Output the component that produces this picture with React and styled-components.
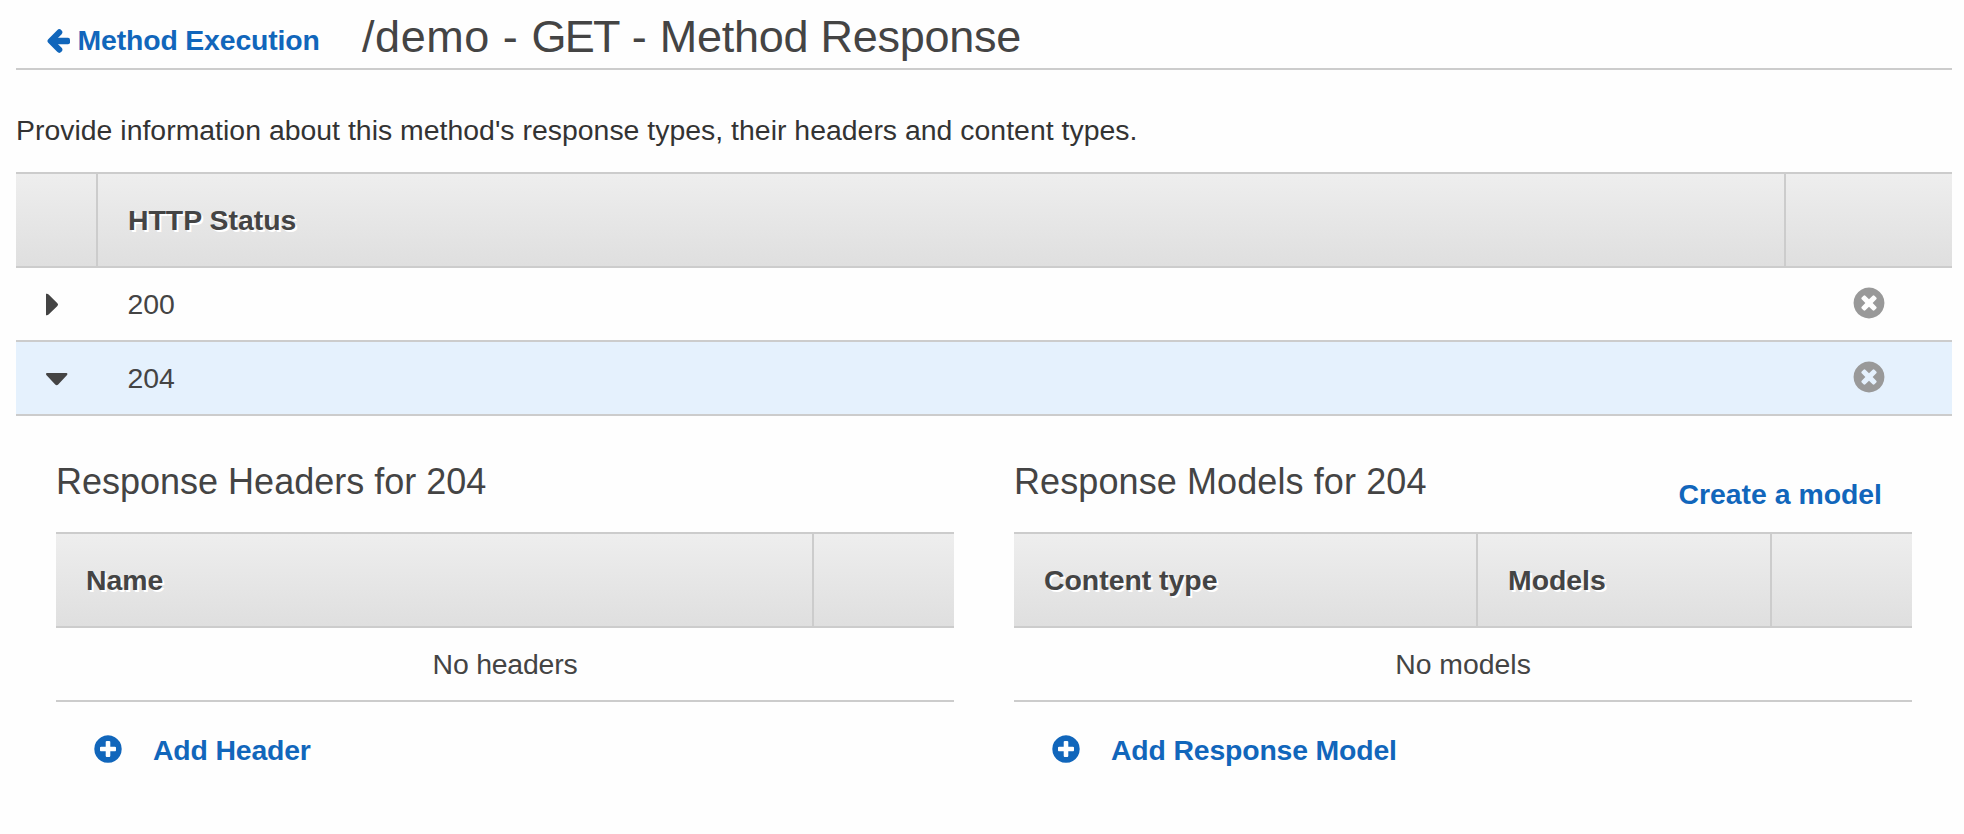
import React from "react";
import styled, { createGlobalStyle, css } from "styled-components";

const GlobalStyle = createGlobalStyle`
  *, *::before, *::after { box-sizing: border-box; }
  body {
    margin: 0;
    background: #fefefe;
    color: #444;
    font-family: "Liberation Sans", Arial, Helvetica, sans-serif;
    font-size: 28.4px;
    line-height: 32px;
    white-space: nowrap;
  }
`;

const LINE = "#ccc";
const BLUE = "#1166bb";

const Page = styled.main`
  height: 834px;
  padding: 0 12px 0 16px;
  overflow: hidden;
`;

const TopBar = styled.header`
  display: flex;
  align-items: flex-start;
  height: 70px;
  padding-left: 30px;
  border-bottom: 2px solid ${LINE};
`;

const Link = styled.a`
  color: ${BLUE};
  font-weight: bold;
  cursor: pointer;
`;

const BackLink = styled(Link)`
  display: flex;
  align-items: center;
  width: 316px;
  gap: 7.5px;
  margin-top: 24px;
  letter-spacing: -0.14px;

  svg {
    margin-top: 2px;
  }
`;

const Title = styled.h1`
  margin: 11px 0 0;
  font-size: 45px;
  line-height: 51px;
  font-weight: normal;
  white-space: pre;
`;

const TitlePart = styled.span`
  letter-spacing: ${(p) => p.$track}px;
`;

const Intro = styled.p`
  margin: 44px 0 26px;
  color: #333;
  letter-spacing: 0.02px;
`;

const HeadRow = styled.div`
  display: grid;
  grid-template-columns: ${(p) => p.$columns};
  height: 96px;
  border: solid ${LINE};
  border-width: 2px 0;
  background: linear-gradient(#eee, #dfdfdf);
`;

const HeadCell = styled.div`
  display: flex;
  align-items: center;
  padding-left: 30px;
  font-weight: bold;
  text-shadow: 2px 2px 0 #fff;

  & + & {
    border-left: 2px solid ${LINE};
  }
`;

const Row = styled.div`
  display: grid;
  grid-template-columns: 82px 1fr 166px;
  align-items: center;
  height: 74px;
  border-bottom: 2px solid ${LINE};
  ${(p) =>
    p.$selected &&
    css`
      background: #e5f1fd;
    `}
`;

const Toggle = styled.div`
  display: flex;
  padding: 2px 0 0 30px;
`;

const Code = styled.div`
  padding-left: 29.5px;
`;

const Remove = styled.div`
  display: flex;
  padding: 0 0 2px 65px;
`;

const Details = styled.div`
  display: grid;
  grid-template-columns: 898px 898px;
  gap: 60px;
  padding: 0 40px;
`;

const PanelTop = styled.div`
  display: flex;
  justify-content: space-between;
  height: 116px;
  padding: 45px 30px 0 0;
`;

const PanelTitle = styled.h2`
  margin: 0;
  font-size: 36px;
  line-height: 41px;
  font-weight: normal;
  letter-spacing: ${(p) => p.$track || 0}px;
`;

const PanelAction = styled(Link)`
  margin-top: 17px;
`;

const EmptyRow = styled.div`
  height: 74px;
  padding-top: 20px;
  border-bottom: 2px solid ${LINE};
  text-align: center;
  letter-spacing: ${(p) => p.$track || 0}px;
`;

const AddLink = styled(Link)`
  display: flex;
  align-items: flex-start;
  gap: 29px;
  padding: 32px 0 0 36px;
  letter-spacing: -0.16px;

  svg {
    margin-top: -1px;
  }
`;

const Glyph = styled.svg`
  display: block;
  flex: none;
  width: ${(p) => p.$size}px;
  height: ${(p) => p.$size}px;
  fill: ${(p) => p.$color || "currentColor"};
`;

const DISC =
  "q0 209-103 385.5t-279.5 279.5-385.5 103-385.5-103-279.5-279.5-103-385.5 103-385.5 279.5-279.5 385.5-103 385.5 103 279.5 279.5 103 385.5z";

const ArrowLeft = () => (
  <Glyph $size={24} viewBox="0 0 24 24">
    <path
      d="M13.300 3.300L4.600 12l8.700 8.700"
      fill="none"
      stroke="currentColor"
      strokeWidth="6"
      strokeLinecap="round"
      strokeLinejoin="round"
    />
    <rect x="5" y="8.800" width="19" height="6.400" rx="2" />
  </Glyph>
);

const Caret = ({ open }) => (
  <Glyph $size={24} viewBox="0 0 24 24">
    {open ? (
      <path d="M1 6H20.400Q21.400 6 21.400 7Q21.200 8 20.600 8.600L12.200 17.500Q10.700 19 9.200 17.500L.8 8.600Q.2 8 0 7Q0 6 1 6Z" />
    ) : (
      <path d="M0 .8H.8Q1.900 .8 2.600 1.500L11.400 10.300Q12.800 11.600 11.400 12.900L2.600 21.600Q1.900 22.300 .8 22.300H0Z" />
    )}
  </Glyph>
);

const TimesCircle = () => (
  <Glyph $size={36} $color="#999" viewBox="0 0 1792 1792">
    <path
      d={
        "M1277 1122q0-26-19-45l-181-181 181-181q19-19 19-45 0-27-19-46l-90-90q-19-19-46-19-26 0-45 19l-181 181-181-181q-19-19-45-19-27 0-46 19l-90 90q-19 19-19 46 0 26 19 45l181 181-181 181q-19 19-19 45 0 27 19 46l90 90q19 19 46 19 26 0 45-19l181-181 181 181q19 19 45 19 27 0 46-19l90-90q19-19 19-46zm387-226" +
        DISC
      }
    />
  </Glyph>
);

const PlusCircle = () => (
  <Glyph $size={32} viewBox="0 0 1792 1792">
    <path
      d={
        "M1344 960v-128q0-26-19-45t-45-19h-256v-256q0-26-19-45t-45-19h-128q-26 0-45 19t-19 45v256h-256q-26 0-45 19t-19 45v128q0 26 19 45t45 19h256v256q0 26 19 45t45 19h128q26 0 45-19t19-45v-256h256q26 0 45-19t19-45zm320-64" +
        DISC
      }
    />
  </Glyph>
);

const StatusRow = ({ code, open }) => (
  <Row $selected={open}>
    <Toggle>
      <Caret open={open} />
    </Toggle>
    <Code>{code}</Code>
    <Remove>
      <TimesCircle />
    </Remove>
  </Row>
);

export default function App() {
  return (
    <>
      <GlobalStyle />
      <Page>
        <TopBar>
          <BackLink>
            <ArrowLeft />
            Method Execution
          </BackLink>
          <Title>
            <TitlePart $track={0.55}>{"/demo - "}</TitlePart>
            <TitlePart $track={-1.7}>GET</TitlePart>
            <TitlePart $track={0.3}>{" - "}</TitlePart>
            <TitlePart $track={-0.27}>Method Response</TitlePart>
          </Title>
        </TopBar>
        <Intro>
          Provide information about this method's response types, their headers
          and content types.
        </Intro>

        <HeadRow $columns="80px 1fr 168px">
          <HeadCell />
          <HeadCell>HTTP Status</HeadCell>
          <HeadCell />
        </HeadRow>
        <StatusRow code="200" />
        <StatusRow code="204" open />

        <Details>
          <section>
            <PanelTop>
              <PanelTitle>Response Headers for 204</PanelTitle>
            </PanelTop>
            <HeadRow $columns="756px 1fr">
              <HeadCell>Name</HeadCell>
              <HeadCell />
            </HeadRow>
            <EmptyRow $track={-0.2}>No headers</EmptyRow>
            <AddLink>
              <PlusCircle />
              Add Header
            </AddLink>
          </section>
          <section>
            <PanelTop>
              <PanelTitle $track={0.1}>Response Models for 204</PanelTitle>
              <PanelAction>Create a model</PanelAction>
            </PanelTop>
            <HeadRow $columns="462px 294px 1fr">
              <HeadCell>Content type</HeadCell>
              <HeadCell>Models</HeadCell>
              <HeadCell />
            </HeadRow>
            <EmptyRow>No models</EmptyRow>
            <AddLink>
              <PlusCircle />
              Add Response Model
            </AddLink>
          </section>
        </Details>
      </Page>
    </>
  );
}
